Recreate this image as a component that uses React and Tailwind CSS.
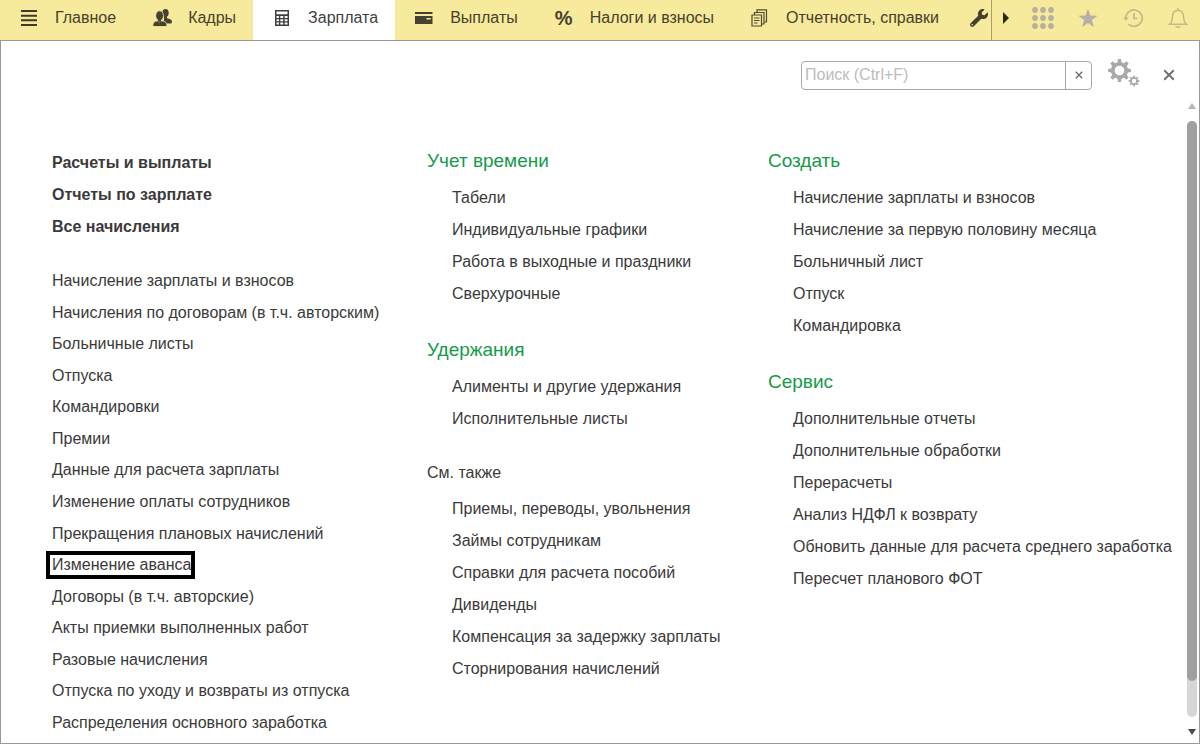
import { FaWrench } from "react-icons/fa";

const ICON = "h-[18px] w-[18px] shrink-0";

function ListIcon() {
  return (
    <svg viewBox="0 0 18 18" className={ICON} fill="#3d3a28" aria-hidden="true">
      <path d="M1 1h16v2H1zM1 5.700h16v2H1zM1 10.300h16v2H1zM1 15h16v2H1z" />
    </svg>
  );
}

function PeopleIcon() {
  return (
    <svg viewBox="0 0 18 18" className={ICON + " overflow-visible"} fill="#46422f" aria-hidden="true">
      <ellipse cx="12.500" cy="4" rx="3.200" ry="4" />
      <path d="M11 6h3v3.200c2.800.5 5 1.500 5 3.300 0 .9-.3 1.500-.8 2H11z" />
      <g stroke="#f8ea9c" strokeWidth=".8">
        <path d="M0 17.500c-.5-3.500 1-5.200 4.300-5.700l2.200 1.400 2.300-1.400c3.800.5 5.400 2.200 5 5.700z" />
        <ellipse cx="6.600" cy="6.700" rx="3.900" ry="4.900" />
      </g>
      <path d="M5.200 10h2.800v2.500l-1.400 1-1.400-1z" />
    </svg>
  );
}

function CalculatorIcon() {
  return (
    <svg viewBox="0 0 18 18" className={ICON} aria-hidden="true">
      <path fill="#3f3f42" fillRule="evenodd" d="M2 1h14v16H2zM3.500 2.500v2.800h11V2.500zM3.500 7v2h2.400V7zM7.300 7v2h2.900V7zM11.700 7v2h2.800V7zM3.500 10.300v2h2.400v-2zM7.300 10.300v2h2.900v-2zM11.700 10.300v2h2.800v-2zM3.500 13.600v2h2.400v-2zM7.300 13.600v2h2.900v-2zM11.700 13.600v2h2.800v-2z" />
    </svg>
  );
}

function CardIcon() {
  return (
    <svg viewBox="0 0 18 18" className={ICON} aria-hidden="true">
      <path fill="#46422f" fillRule="evenodd" d="M0 3h17.500v2H0zM0 7h17.500v8H0zM11.500 9v1.600h4.200V9z" />
    </svg>
  );
}

function PercentIcon() {
  return (
    <span className="flex h-[18px] w-[18px] shrink-0 items-center justify-center text-xl font-bold text-[#46422f]" aria-hidden="true">
      %
    </span>
  );
}

function DocumentsIcon() {
  return (
    <svg viewBox="0 0 18 18" className={ICON} fill="none" stroke="#4f4a33" strokeWidth="1.200" aria-hidden="true">
      <path d="M1 6h9.500v11H1zM3.500 5.500v-2H13V15h-2M6 3V.8h9.500V13h-2" />
      <path d="M3 9h5.500M3 11.500h5.500M3 14h3.500" />
    </svg>
  );
}

function gearPath(cx, cy, outer, inner, teeth) {
  const step = (Math.PI * 2) / teeth;
  const corners = [[-0.3, inner], [-0.17, outer], [0.17, outer], [0.3, inner]];
  let d = "";
  for (let i = 0; i < teeth; i += 1) {
    corners.forEach(([offset, radius]) => {
      const angle = (i + offset) * step - Math.PI / 2;
      d += `${d ? "L" : "M"}${(cx + radius * Math.cos(angle)).toFixed(2)} ${(cy + radius * Math.sin(angle)).toFixed(2)}`;
    });
  }
  return d + "Z";
}

function circlePath(cx, cy, r) {
  return `M${cx - r} ${cy}a${r} ${r} 0 1 0 ${2 * r} 0a${r} ${r} 0 1 0 ${-2 * r} 0Z`;
}

function GearsIcon() {
  return (
    <svg viewBox="0 0 32 28" className="h-7 w-8" fill="#a9a9a9" fillRule="evenodd" aria-hidden="true">
      <path d={gearPath(11.5, 11.5, 11.5, 8.6, 8) + circlePath(11.5, 11.5, 4.8)} />
      <path d={gearPath(26, 22, 5.5, 4, 8) + circlePath(26, 22, 2.2)} />
    </svg>
  );
}

function CrossIcon({ className }) {
  return (
    <svg viewBox="0 0 10 10" className={className} fill="none" stroke="currentColor" aria-hidden="true">
      <path d="M1 1l8 8M9 1l-8 8" strokeWidth="1.600" />
    </svg>
  );
}

function DotsIcon() {
  const points = [3, 11, 19];
  return (
    <svg viewBox="0 0 22 22" className="h-[22px] w-[22px]" fill="#b9b09a" aria-hidden="true">
      {points.map((y) => points.map((x) => <circle key={`${x}-${y}`} cx={x} cy={y} r="2.900" />))}
    </svg>
  );
}

function StarIcon() {
  return (
    <svg viewBox="0 0 20 20" className="h-5 w-5" fill="#b5aeaa" aria-hidden="true">
      <path d="M10 .8l2.400 6.700 7.100.2-5.600 4.400 2 6.900L10 15l-5.900 4 2-6.900L.5 7.700l7.100-.2z" />
    </svg>
  );
}

function HistoryIcon() {
  return (
    <svg viewBox="0 0 20 20" className="h-5 w-5" fill="none" stroke="#c5b987" strokeWidth="1.700" aria-hidden="true">
      <path d="M2.800 10.500A8.200 8.200 0 1 1 5.200 16" />
      <path d="M11 5v5.500h3.500" />
      <path d="M0 9.500h5.800L2.900 12.800z" fill="#c5b987" stroke="none" />
    </svg>
  );
}

function BellIcon() {
  return (
    <svg viewBox="0 0 20 20" className="h-5 w-5" fill="none" stroke="#c5b987" strokeWidth="1.500" aria-hidden="true">
      <path d="M10 0v2M1.500 16.300c2.300-1.700 2.700-3.500 2.900-7.300C4.600 5 6.700 2.200 10 2.200S15.400 5 15.600 9c.2 3.800.6 5.600 2.900 7.300z" />
      <path d="M7 18.300h6l-1.200 1.500H8.200z" fill="#c5b987" stroke="none" />
    </svg>
  );
}

const tabs = [
  { label: "Главное", Icon: ListIcon },
  { label: "Кадры", Icon: PeopleIcon },
  { label: "Зарплата", Icon: CalculatorIcon, active: true },
  { label: "Выплаты", Icon: CardIcon },
  { label: "Налоги и взносы", Icon: PercentIcon },
  { label: "Отчетность, справки", Icon: DocumentsIcon },
];

const tools = [
  { label: "Меню функций", Icon: DotsIcon },
  { label: "Избранное", Icon: StarIcon },
  { label: "История", Icon: HistoryIcon },
  { label: "Уведомления", Icon: BellIcon },
];

const mainLinks = ["Расчеты и выплаты", "Отчеты по зарплате", "Все начисления"];

const journalLinks = [
  "Начисление зарплаты и взносов",
  "Начисления по договорам (в т.ч. авторским)",
  "Больничные листы",
  "Отпуска",
  "Командировки",
  "Премии",
  "Данные для расчета зарплаты",
  "Изменение оплаты сотрудников",
  "Прекращения плановых начислений",
  "Изменение аванса",
  "Договоры (в т.ч. авторские)",
  "Акты приемки выполненных работ",
  "Разовые начисления",
  "Отпуска по уходу и возвраты из отпуска",
  "Распределения основного заработка",
];
const highlighted = "Изменение аванса";

const middleSections = [
  {
    title: "Учет времени",
    links: ["Табели", "Индивидуальные графики", "Работа в выходные и праздники", "Сверхурочные"],
  },
  { title: "Удержания", links: ["Алименты и другие удержания", "Исполнительные листы"] },
  {
    title: "См. также",
    plain: true,
    links: [
      "Приемы, переводы, увольнения",
      "Займы сотрудникам",
      "Справки для расчета пособий",
      "Дивиденды",
      "Компенсация за задержку зарплаты",
      "Сторнирования начислений",
    ],
  },
];

const rightSections = [
  {
    title: "Создать",
    links: [
      "Начисление зарплаты и взносов",
      "Начисление за первую половину месяца",
      "Больничный лист",
      "Отпуск",
      "Командировка",
    ],
  },
  {
    title: "Сервис",
    links: [
      "Дополнительные отчеты",
      "Дополнительные обработки",
      "Перерасчеты",
      "Анализ НДФЛ к возврату",
      "Обновить данные для расчета среднего заработка",
      "Пересчет планового ФОТ",
    ],
  },
];

function Section({ title, plain, links }) {
  return (
    <section>
      <h2 className={plain ? "mb-1.5 flex h-7 items-center" : "mb-[5px] flex h-8 items-center text-[19px] text-[#169a4a]"}>
        {title}
      </h2>
      <ul className="pl-[25px]">
        {links.map((link) => (
          <li key={link} className="flex h-8 items-center">
            <a href="#" className="hover:underline">{link}</a>
          </li>
        ))}
      </ul>
    </section>
  );
}

export default function App() {
  return (
    <div className="flex min-h-screen flex-col bg-white pb-0.5 font-['Liberation_Sans',Arial,sans-serif] text-base leading-5 whitespace-nowrap text-[#3a3a3a]">
      <header className="flex h-10 bg-[#f8ea9c]">
        <nav className="flex min-w-0 flex-1 overflow-hidden text-[#45412c]">
          {tabs.map(({ label, Icon, active }) => (
            <a
              key={label}
              href="#"
              aria-current={active ? "page" : undefined}
              className={
                active
                  ? "flex shrink-0 items-center gap-[17px] bg-white pr-[17px] pb-1 pl-5 text-[#3f3f42]"
                  : "flex shrink-0 items-center gap-[17px] pr-[17px] pb-1 pl-5"
              }
            >
              <Icon />
              {label}
            </a>
          ))}
          <a href="#" aria-label="Настройка" className="flex shrink-0 items-center pb-1 pl-3.5">
            <FaWrench className={ICON} aria-hidden="true" />
          </a>
        </nav>
        <div className="flex shrink-0 border-l border-[#a89f70]">
          <button type="button" aria-label="Далее" className="flex w-7 items-center justify-center pb-1">
            <svg viewBox="0 0 6 12" className="h-3 w-1.5" fill="#2e2810" aria-hidden="true">
              <path d="M0 0l6 6-6 6z" />
            </svg>
          </button>
          {tools.map(({ label, Icon }) => (
            <button key={label} type="button" aria-label={label} className="flex w-[45px] items-center justify-center pb-1">
              <Icon />
            </button>
          ))}
        </div>
      </header>

      <main className="flex flex-1 flex-col border border-[#999999]">
        <div className="flex items-center justify-end pt-[18px] pr-6">
          <form role="search" className="flex h-[29px] w-[291px] overflow-hidden rounded border border-[#a8a8a8]">
            <input
              type="text"
              aria-label="Поиск"
              placeholder="Поиск (Ctrl+F)"
              className="min-w-0 flex-1 px-[3px] outline-none placeholder:text-[#bcbcbc]"
            />
            <button type="reset" aria-label="Очистить" className="flex w-[26px] items-center justify-center border-l border-[#a8a8a8] text-[#666666]">
              <CrossIcon className="h-2 w-2" />
            </button>
          </form>
          <button type="button" aria-label="Настройки" className="ml-4 pb-1">
            <GearsIcon />
          </button>
          <button type="button" aria-label="Закрыть" className="ml-[23px] text-[#707070]">
            <CrossIcon className="h-3 w-3" />
          </button>
        </div>

        <div className="flex flex-1">
          <div className="grid flex-1 grid-cols-[375fr_341fr_417fr] pt-[54px] pb-1.5 pl-[51px]">
            <div className="flex flex-col pt-0.5">
              <ul className="font-bold">
                {mainLinks.map((link) => (
                  <li key={link} className="flex h-8 items-center">
                    <a href="#" className="hover:underline">{link}</a>
                  </li>
                ))}
              </ul>
              <ul className="mt-6 flex flex-1 flex-col justify-between">
                {journalLinks.map((link) => (
                  <li key={link} className="flex h-7 items-center">
                    <a
                      href="#"
                      className={
                        link === highlighted
                          ? "-ml-1.5 flex h-7 items-center border-4 border-black pl-0.5"
                          : "hover:underline"
                      }
                    >
                      {link}
                    </a>
                  </li>
                ))}
              </ul>
            </div>
            <div className="flex flex-col gap-6">
              {middleSections.map((section) => (
                <Section key={section.title} {...section} />
              ))}
            </div>
            <div className="flex flex-col gap-6">
              {rightSections.map((section) => (
                <Section key={section.title} {...section} />
              ))}
            </div>
          </div>

          <div className="flex w-3.5 flex-col items-center pt-3 pb-2" aria-hidden="true">
            <svg viewBox="0 0 8 6" className="h-1.5 w-2" fill="#b5b5b5">
              <path d="M4 0l4 6H0z" />
            </svg>
            <div className="my-3 flex w-2.5 flex-1 flex-col rounded-full bg-[#d6d6d6]">
              <div className="h-[94%] rounded-full bg-[#a0a0a0]" />
            </div>
            <svg viewBox="0 0 8 6" className="h-1.5 w-2" fill="#4a4a4a">
              <path d="M0 0h8L4 6z" />
            </svg>
          </div>
        </div>
      </main>
    </div>
  );
}
